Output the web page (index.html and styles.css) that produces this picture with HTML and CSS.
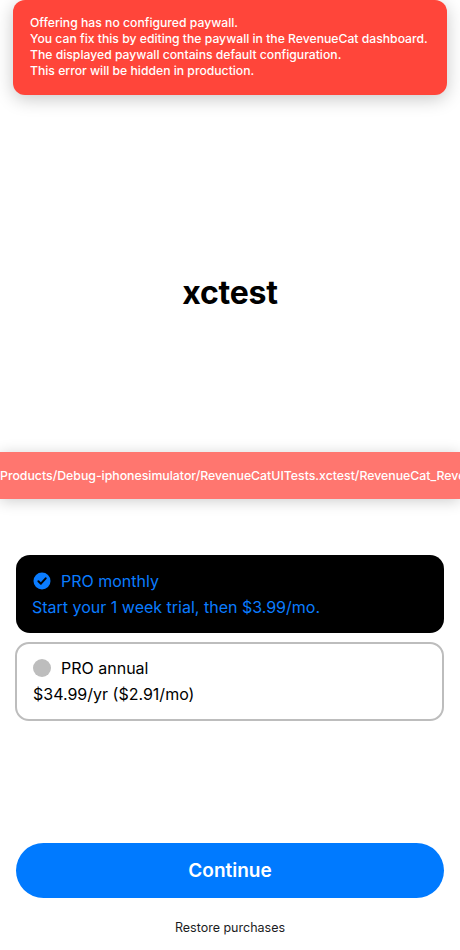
FILE: index.html
```html
<!DOCTYPE html>
<html lang="en">
<head>
<meta charset="utf-8">
<title>Paywall</title>
<link rel="stylesheet" href="styles.css">
</head>
<body>
<div class="page">
  <div class="toast">
    <p>Offering has no configured paywall.</p>
    <p>You can fix this by editing the paywall in the RevenueCat dashboard.</p>
    <p>The displayed paywall contains default configuration.</p>
    <p>This error will be hidden in production.</p>
  </div>

  <header class="hero">
    <h1 class="title">xctest</h1>
  </header>

  <div class="strip">
    <span class="strip-text">Products/Debug-iphonesimulator/RevenueCatUITests.xctest/RevenueCat_RevenueCatUI.bundle/background.jpg</span>
  </div>

  <div class="plans">
    <div class="plan plan-selected">
      <div class="plan-head">
        <svg class="check" width="18" height="18" viewBox="0 0 18 18">
          <circle cx="9" cy="9" r="8.5" fill="#0a7cff"/>
          <path d="M5.4 9.3 L7.9 11.7 L12.7 6.3" fill="none" stroke="#000" stroke-width="2" stroke-linecap="round" stroke-linejoin="round"/>
        </svg>
        <span class="plan-name">PRO monthly</span>
      </div>
      <div class="plan-detail">Start your 1 week trial, then $3.99/mo.</div>
    </div>
    <div class="plan plan-other">
      <div class="plan-head">
        <span class="dot"></span>
        <span class="plan-name">PRO annual</span>
      </div>
      <div class="plan-detail">$34.99/yr ($2.91/mo)</div>
    </div>
  </div>

  <button class="cta">Continue</button>
  <div class="restore">Restore purchases</div>
</div>
</body>
</html>
```

FILE: styles.css
```css
* { box-sizing: border-box; }

html, body {
  margin: 0;
  padding: 0;
  background: #ffffff;
}

body {
  font-family: Inter, "Liberation Sans", Arial, sans-serif;
  color: #000;
}

.page {
  position: relative;
  width: 460px;
  height: 950px;
  display: flex;
  flex-direction: column;
  overflow: hidden;
}

.toast {
  position: absolute;
  top: 0;
  left: 13px;
  width: 434px;
  height: 95px;
  background: #ff453a;
  border-radius: 12px;
  padding: 15px 17px;
  box-shadow: 0 4px 18px rgba(0, 0, 0, 0.22);
  z-index: 2;
}

.toast p {
  margin: 0;
  color: #fff;
  font-size: 12.2px;
  line-height: 16px;
  font-weight: 500;
  white-space: nowrap;
}

.hero {
  height: 452px;
  display: flex;
  flex-direction: column;
  align-items: center;
}

.title {
  margin: 273px 0 0;
  font-size: 32px;
  line-height: 40px;
  font-weight: 700;
  letter-spacing: -0.2px;
}

.strip {
  height: 47px;
  background: #ff766f;
  box-shadow: 0 2px 14px rgba(0, 0, 0, 0.2);
  overflow: hidden;
  white-space: nowrap;
  display: flex;
  align-items: center;
}

.strip-text {
  color: #fff;
  font-size: 12.3px;
  font-weight: 500;
}

.plans {
  margin-top: 56px;
  padding: 0 16px;
  display: flex;
  flex-direction: column;
  gap: 9px;
}

.plan {
  height: 78px;
  border-radius: 14px;
  padding: 13px 16px 0;
}

.plan-selected {
  background: #000;
  color: #0a7cff;
}

.plan-other {
  height: 79px;
  margin-left: -1px;
  border: 2px solid #bdbdbd;
  padding: 11px 15px 0 16px;
  color: #000;
}

.plan-head {
  display: flex;
  align-items: center;
  gap: 10px;
  height: 26px;
}

.check {
  display: block;
  margin-left: 1px;
}

.dot {
  width: 18px;
  height: 18px;
  border-radius: 50%;
  background: #bdbdbd;
}

.plan-name,
.plan-detail {
  font-size: 16px;
  line-height: 26px;
  font-weight: 400;
}

.cta {
  margin: auto 16px 0;
  height: 55px;
  border: none;
  border-radius: 28px;
  background: #007aff;
  color: #fff;
  font-family: inherit;
  font-size: 19px;
  font-weight: 600;
  padding: 0;
}

.restore {
  margin-top: 22px;
  margin-bottom: 14px;
  text-align: center;
  font-size: 12.5px;
  line-height: 16px;
  color: #1c1c1e;
}
```
